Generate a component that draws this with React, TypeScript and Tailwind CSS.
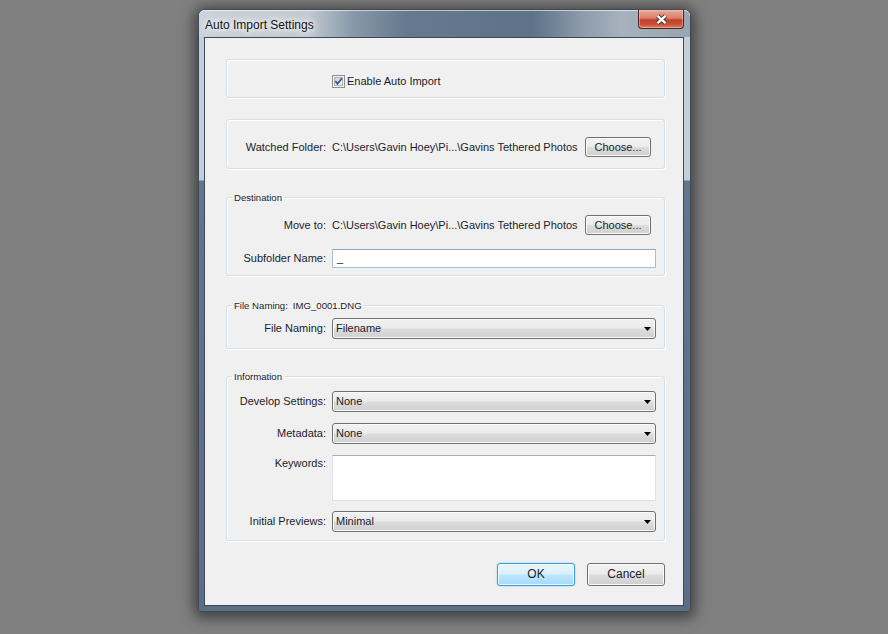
import React from "react";

// Win7 "Auto Import Settings" dialog (Lightroom), drawn on a flat gray desktop.

const btnGrad =
  "bg-[linear-gradient(to_bottom,#f2f2f2_0%,#ebebeb_48%,#dddddd_52%,#cfcfcf_100%)]";

function Label({ children, top }: { children: React.ReactNode; top?: boolean }) {
  return (
    <div className={`w-[99px] shrink-0 text-right ${top ? "self-start pt-[2px]" : ""}`}>
      {children}
    </div>
  );
}

function Row({ children, className = "" }: { children: React.ReactNode; className?: string }) {
  return <div className={`flex items-center gap-[6px] ${className}`}>{children}</div>;
}

function Select({ value }: { value: string }) {
  return (
    <div
      className={`flex h-[21px] w-[324px] items-center justify-between rounded-[3px] border border-[#707070] ${btnGrad} pl-[3px] pr-[4px] shadow-[inset_0_0_0_1px_#fafafa]`}
    >
      <span>{value}</span>
      <svg width="7" height="4" viewBox="0 0 7 4">
        <path d="M0 0h7L3.5 4z" fill="#000" />
      </svg>
    </div>
  );
}

function Button({ children, className = "" }: { children: React.ReactNode; className?: string }) {
  return (
    <div
      className={`flex items-center justify-center rounded-[3px] border border-[#707070] ${btnGrad} shadow-[inset_0_0_0_1px_#fbfbfb] ${className}`}
    >
      {children}
    </div>
  );
}

function Group({
  legend,
  children,
  className = "",
}: {
  legend: React.ReactNode;
  children: React.ReactNode;
  className?: string;
}) {
  return (
    <fieldset
      className={`rounded-[3px] border border-[#d5dfe5] shadow-[inset_1px_1px_0_#fff,1px_1px_0_#fff] ${className}`}
    >
      <legend className="ml-[5px] px-[2px] text-[9.6px] leading-[13px]">{legend}</legend>
      {children}
    </fieldset>
  );
}

const path = "C:\\Users\\Gavin Hoey\\Pi...\\Gavins Tethered Photos";

export default function App() {
  return (
    <div className="h-[634px] w-[888px] overflow-hidden bg-[#808080] pl-[198px] pt-[9px] font-['Liberation_Sans',Arial,sans-serif] text-[11px] leading-[13px] text-[#1c1c2c]">
      <div className="flex h-[603px] w-[493px] flex-col rounded-t-[7px] rounded-b-[3px] border border-[#3f4954] bg-[linear-gradient(to_bottom,#c4ced8_0px,#c4ced8_170px,#62768b_171px,#5b6e83_100%)] shadow-[0_2px_14px_4px_rgba(0,0,0,0.5)]">
        {/* title bar */}
        <div className="flex h-[27px] shrink-0 rounded-t-[6px] bg-[linear-gradient(to_right,#cbd2d9_0%,#c2cad2_22%,#8a9aab_31%,#66798e_42%,#5e7287_68%,#8d9bab_78%,#a7b2bd_86%,#98a5b2_100%)] pl-[6px] pr-[6px] shadow-[inset_0_1px_0_rgba(255,255,255,0.6)]">
          <div className="flex flex-1 items-center pt-[3px] text-[12px] text-[#111] [text-shadow:0_0_8px_#fff,0_0_12px_#fff,0_0_4px_#fff]">
            Auto Import Settings
          </div>
          <div className="flex h-[19px] w-[46px] items-center justify-center rounded-b-[4px] border border-t-0 border-[#4b2620] bg-[linear-gradient(to_bottom,#e9ab9b_0%,#db7f6b_45%,#c4402a_55%,#c85038_80%,#dd8260_100%)] shadow-[inset_0_0_0_1px_rgba(255,210,200,0.45)]">
            <svg width="13" height="11" viewBox="0 0 13 11">
              <path d="M2.5 1.8 L10.5 9.2 M10.5 1.8 L2.5 9.2" stroke="#473833" strokeWidth="4.4" />
              <path d="M2.5 1.8 L10.5 9.2 M10.5 1.8 L2.5 9.2" stroke="#fff" strokeWidth="2.4" />
            </svg>
          </div>
        </div>

        {/* client area */}
        <div className="ml-[5px] mr-[6px] mb-[5px] flex flex-1 flex-col border border-[#3c4856] bg-[#f0f0f0] pt-[21px] pl-[21px] pr-[18px]">
          <div className="flex h-[39px] items-center rounded-[3px] border border-[#d5dfe5] pt-[5px] pl-[105px] shadow-[inset_1px_1px_0_#fff,1px_1px_0_#fff]">
            <svg width="13" height="13" viewBox="0 0 13 13">
              <defs>
                <linearGradient id="cb" x1="0" y1="0" x2="1" y2="1">
                  <stop offset="0" stopColor="#cbcfd5" />
                  <stop offset="1" stopColor="#f6f6f6" />
                </linearGradient>
              </defs>
              <rect x="0.5" y="0.5" width="12" height="12" fill="#f4f4f4" stroke="#8e8f8f" />
              <rect x="2.5" y="2.5" width="8" height="8" fill="url(#cb)" stroke="#aeb3b9" />
              <path d="M3.3 6.2 L5.5 8.7 L9.9 3.4" fill="none" stroke="#3f5490" strokeWidth="1.8" />
            </svg>
            <span className="ml-[2px]">Enable Auto Import</span>
          </div>

          <div className="mt-[21px] flex h-[50px] items-center rounded-[3px] border border-[#d5dfe5] pt-[6px] pr-[13px] shadow-[inset_1px_1px_0_#fff,1px_1px_0_#fff]">
            <Row className="flex-1">
              <Label>Watched Folder:</Label>
              <span>{path}</span>
              <Button className="ml-auto h-[20px] w-[66px]">Choose...</Button>
            </Row>
          </div>

          <Group legend="Destination" className="mt-[22px] pt-[11px] pb-[7px]">
            <Row className="pr-[13px]">
              <Label>Move to:</Label>
              <span>{path}</span>
              <Button className="ml-auto h-[20px] w-[66px]">Choose...</Button>
            </Row>
            <Row className="mt-[14px]">
              <Label>Subfolder Name:</Label>
              <div className="flex h-[19px] w-[324px] items-center border border-[#a9bdd3] border-t-[#8fa8c4] bg-white pl-[4px]">
                _
              </div>
            </Row>
          </Group>

          <Group
            legend={
              <>
                File Naming:<span className="ml-[5px]">IMG_0001.DNG</span>
              </>
            }
            className="mt-[23px] pt-[6px] pb-[9px]"
          >
            <Row>
              <Label>File Naming:</Label>
              <Select value="Filename" />
            </Row>
          </Group>

          <Group legend="Information" className="mt-[21px] pt-[8px] pb-[8px]">
            <Row>
              <Label>Develop Settings:</Label>
              <Select value="None" />
            </Row>
            <Row className="mt-[11px]">
              <Label>Metadata:</Label>
              <Select value="None" />
            </Row>
            <Row className="mt-[11px]">
              <Label top>Keywords:</Label>
              <div className="h-[46px] w-[324px] border border-[#dfe3e9] border-t-[#abadb3] bg-white" />
            </Row>
            <Row className="mt-[10px]">
              <Label>Initial Previews:</Label>
              <Select value="Minimal" />
            </Row>
          </Group>

          <div className="mt-[22px] flex justify-end gap-[12px]">
            <div className="flex h-[23px] w-[78px] items-center justify-center rounded-[3px] border border-[#3c9ad6] bg-[linear-gradient(to_bottom,#eaf6fd_0%,#d9f0fc_48%,#bee6fd_52%,#a7d9f5_100%)] text-[12px] shadow-[inset_0_0_0_1px_rgba(255,255,255,0.75),0_0_2px_#7fd0f5]">
              OK
            </div>
            <Button className="h-[23px] w-[78px] text-[12px]">Cancel</Button>
          </div>
        </div>
      </div>
    </div>
  );
}
